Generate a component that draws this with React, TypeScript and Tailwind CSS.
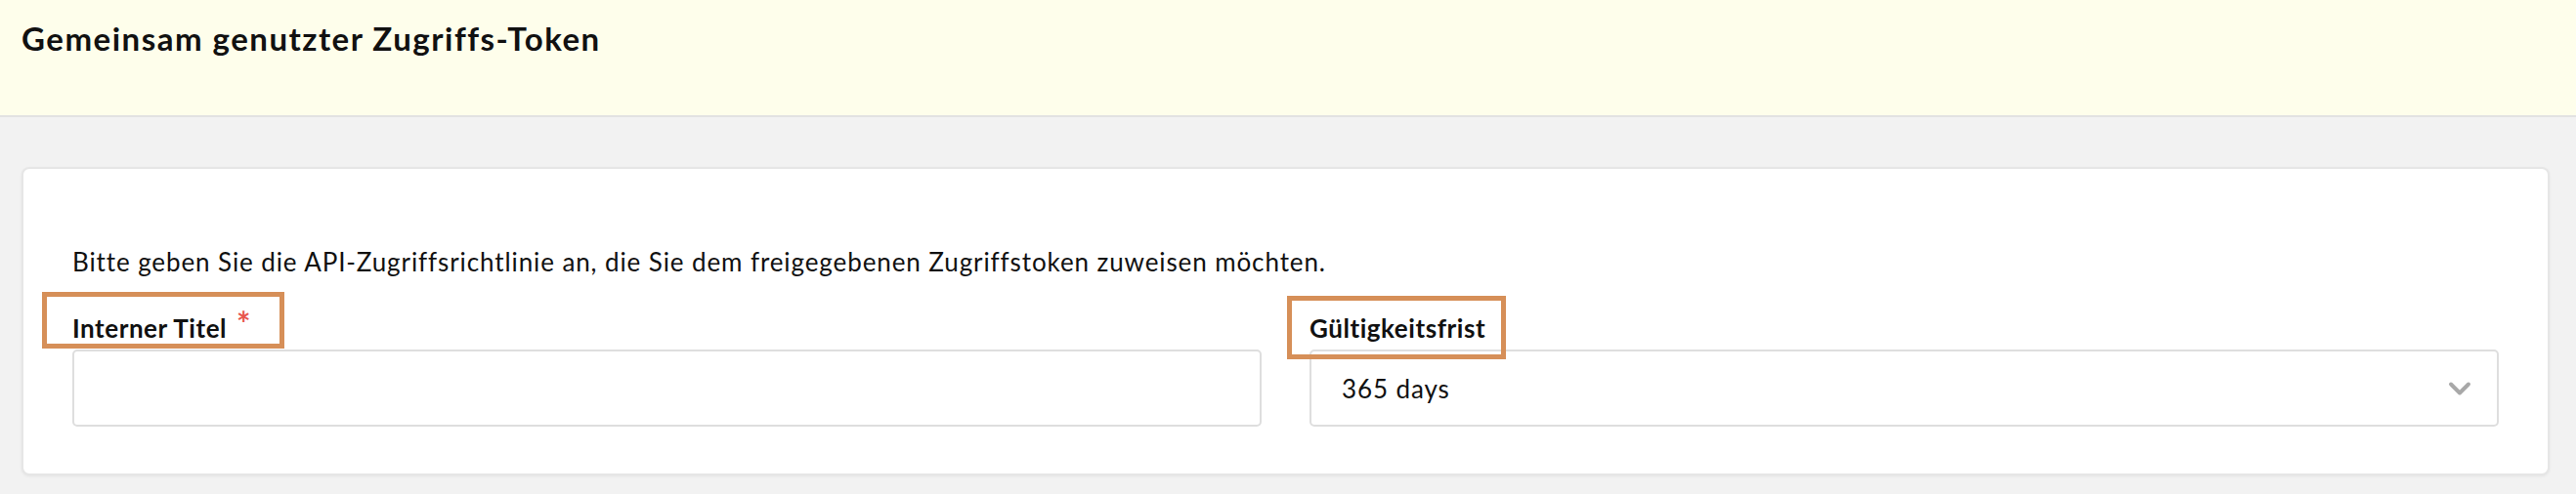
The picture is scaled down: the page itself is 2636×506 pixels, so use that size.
import { ChevronDown } from "lucide-react";

function Annotated({ children, box }: { children: React.ReactNode; box: string }) {
  return (
    <div className="relative flex items-center">
      {children}
      <span className={`pointer-events-none absolute border-[5px] border-[#d68f58] ${box}`} />
    </div>
  );
}

export default function App() {
  return (
    <div className="min-h-screen bg-[#f2f2f2] font-['Lato',sans-serif] text-[#111]">
      <header className="h-[120px] border-b-2 border-[#e2e2e2] bg-[#fefeeb] pl-[22px] pt-[20px]">
        <h1 className="text-[33px] font-bold leading-[38px] tracking-[1.5px]">Gemeinsam genutzter Zugriffs-Token</h1>
      </header>

      <div className="pl-[22px] pr-[27px] pt-[51px]">
        <div className="rounded-[8px] border-2 border-[#e6e6e6] bg-white px-[50px] pt-[80px] pb-[48px] shadow-[0_1px_3px_rgba(0,0,0,0.06)]">
          <p className="text-[26px] leading-[30px] tracking-[0.9px]">
            Bitte geben Sie die API-Zugriffsrichtlinie an, die Sie dem freigegebenen Zugriffstoken zuweisen möchten.
          </p>

          <div className="mt-[38px] grid grid-cols-2 gap-x-[49px]">
            <div>
              <Annotated box="left-[-31px] top-[-22px] h-[58px] w-[248px]">
                <label className="text-[26px] font-bold leading-[30px] tracking-[0.55px]">Interner Titel</label>
                <span className="relative top-[-4px] ml-[10px] self-start text-[34px] font-bold leading-[28px] text-[#e8554e]">*</span>
              </Annotated>
              <input
                type="text"
                className="mt-[7px] block h-[79px] w-full rounded-[5px] border-2 border-[#dedede] bg-white px-[31px] text-[26px] outline-none"
              />
            </div>

            <div>
              <Annotated box="left-[-23px] top-[-18px] h-[65px] w-[224px]">
                <label className="text-[26px] font-bold leading-[30px] tracking-[0.55px]">Gültigkeitsfrist</label>
              </Annotated>
              <div className="mt-[7px] flex h-[79px] w-full items-center justify-between rounded-[5px] border-2 border-[#dedede] bg-white pl-[31px] pr-[20px]">
                <span className="text-[26px] leading-[30px] tracking-[0.9px]">365 days</span>
                <ChevronDown className="h-[36px] w-[36px] text-[#a8a8a8]" strokeWidth={2.6} />
              </div>
            </div>
          </div>
        </div>
      </div>
    </div>
  );
}
